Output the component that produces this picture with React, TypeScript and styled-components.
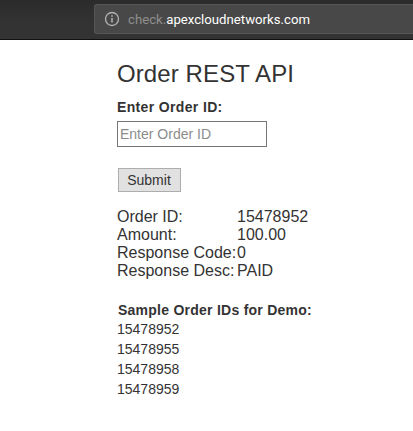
import React from 'react'
import styled, { createGlobalStyle } from 'styled-components'

const GlobalStyle = createGlobalStyle`
  html, body {
    margin: 0;
    padding: 0;
    background: #fff;
    overflow: hidden;
  }
  body {
    font-family: "Liberation Sans", Arial, sans-serif;
    color: #333;
  }
`

const BrowserBar = styled.div`
  height: 40px;
  box-sizing: border-box;
  background: linear-gradient(#2b2b2b, #333 60%);
  border-bottom: 1px solid #111;
  padding: 4px 0 0 94px;
`

const AddressBox = styled.div`
  height: 30px;
  box-sizing: border-box;
  background: #484848;
  border: 1px solid #565656;
  border-right: none;
  border-radius: 3px 0 0 3px;
  display: flex;
  align-items: center;
  padding-left: 9px;
  font-family: Roboto, "Liberation Sans", sans-serif;
  font-size: 13.2px;
`

const InfoIcon = styled.svg`
  width: 16px;
  height: 16px;
  margin-right: 8px;
  color: #b4b4b4;
`

const Subdomain = styled.span`
  color: #8f8f8f;
`

const Domain = styled.span`
  color: #fff;
`

const Content = styled.main`
  padding: 20px 0 0 117px;
`

const Title = styled.h1`
  margin: 0;
  font-size: 24px;
  font-weight: 400;
  line-height: 28px;
  letter-spacing: 0.1px;
`

const FieldLabel = styled.label`
  display: block;
  margin-top: 11px;
  font-size: 14px;
  font-weight: 700;
  line-height: 16px;
  letter-spacing: 0.35px;
`

const OrderInput = styled.input`
  display: block;
  width: 150px;
  height: 26px;
  margin-top: 6px;
  padding: 0 2px;
  box-sizing: border-box;
  border: 1px solid #767676;
  border-radius: 0;
  outline: none;
  font-family: inherit;
  font-size: 14px;

  &::placeholder {
    color: #8c8c8c;
    opacity: 1;
  }
`

const SubmitButton = styled.button`
  display: block;
  width: 63px;
  height: 24px;
  margin: 21px 0 0 1px;
  padding: 0 1px 0 0;
  box-sizing: border-box;
  background: #e1e1e1;
  border: 1px solid #adadad;
  border-radius: 0;
  color: #333;
  font-family: inherit;
  font-size: 14px;
`

const ResultGrid = styled.dl`
  display: grid;
  grid-template-columns: 120px max-content;
  margin: 16px 0 0;
  font-size: 16px;
  line-height: 18px;
`

const ResultLabel = styled.dt`
  margin: 0;
`

const ResultValue = styled.dd`
  margin: 0;
`

const SampleHeading = styled.h2`
  margin: 22px 0 0 1px;
  font-size: 14px;
  font-weight: 700;
  line-height: 16px;
  letter-spacing: 0.25px;
`

const SampleList = styled.ul`
  list-style: none;
  margin: 1px 0 0;
  padding: 0;
  font-size: 14px;
  line-height: 20px;
`

const results = [
  ['Order ID:', '15478952'],
  ['Amount:', '100.00'],
  ['Response Code:', '0'],
  ['Response Desc:', 'PAID'],
]

const sampleIds = ['15478952', '15478955', '15478958', '15478959']

export default function App() {
  return (
    <>
      <GlobalStyle />
      <BrowserBar>
        <AddressBox>
          <InfoIcon viewBox="0 0 16 16" fill="none" stroke="currentColor">
            <circle cx="8" cy="8" r="6.5" strokeWidth="1.3" />
            <path d="M8 7v4.5" strokeWidth="1.5" />
            <path d="M8 4.2v1.6" strokeWidth="1.5" />
          </InfoIcon>
          <span>
            <Subdomain>check.</Subdomain>
            <Domain>apexcloudnetworks.com</Domain>
          </span>
        </AddressBox>
      </BrowserBar>
      <Content>
        <Title>Order REST API</Title>
        <FieldLabel htmlFor="order-id">Enter Order ID:</FieldLabel>
        <OrderInput id="order-id" placeholder="Enter Order ID" />
        <SubmitButton type="button">Submit</SubmitButton>
        <ResultGrid>
          {results.map(([label, value]) => (
            <React.Fragment key={label}>
              <ResultLabel>{label}</ResultLabel>
              <ResultValue>{value}</ResultValue>
            </React.Fragment>
          ))}
        </ResultGrid>
        <SampleHeading>Sample Order IDs for Demo:</SampleHeading>
        <SampleList>
          {sampleIds.map((id) => (
            <li key={id}>{id}</li>
          ))}
        </SampleList>
      </Content>
    </>
  )
}
